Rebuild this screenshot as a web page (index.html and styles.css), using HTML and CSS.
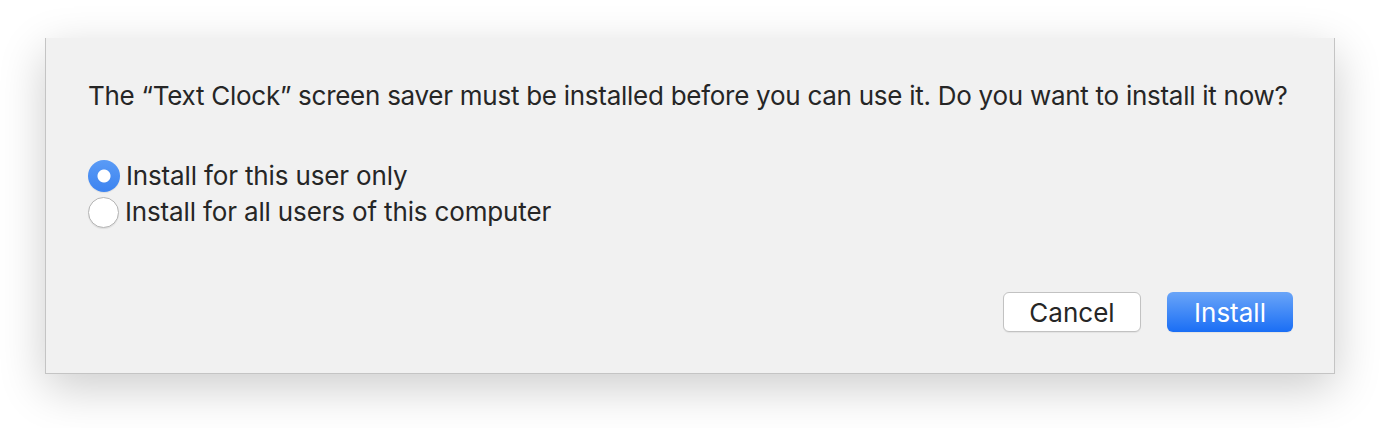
FILE: index.html
```html
<!DOCTYPE html>
<html lang="en">
<head>
  <meta charset="UTF-8" />
  <title>Install Screen Saver</title>
  <link rel="stylesheet" href="styles.css">
</head>
<body>

  <div class="dialog">
    <p class="message">The “Text Clock” screen saver must be installed before you can use it. Do you want to install it now?</p>

    <div class="options">
      <label class="option">
        <span class="radio checked"></span>
        Install for this user only
      </label>
      <label class="option">
        <span class="radio"></span>
        Install for all users of this computer
      </label>
    </div>

    <div class="buttons">
      <button class="btn">Cancel</button>
      <button class="btn primary">Install</button>
    </div>
  </div>

</body>
</html>
```

FILE: styles.css
```css
body {
  margin: 0;
  padding: 38px 0 0;
  background: #fff;
  font-family: Inter, "Liberation Sans", sans-serif;
  color: #262626;
  height: 428px;
  box-sizing: border-box;
  overflow: hidden;
}

.dialog {
  margin: 0 45px;
  height: 336px;
  box-sizing: border-box;
  background: #f1f1f1;
  border: 1px solid #c4c4c4;
  border-top: none;
  box-shadow: 0 14px 44px rgba(0,0,0,0.2);
  padding: 40px 41px 0 42px;
  display: flex;
  flex-direction: column;
}

.message {
  margin: 0;
  font-size: 26px;
  line-height: 36px;
  letter-spacing: -0.27px;
  white-space: nowrap;
}

.options {
  margin-top: 46px;
  display: flex;
  flex-direction: column;
  gap: 4px;
}

.option {
  display: flex;
  align-items: center;
  gap: 6px;
  font-size: 26px;
  line-height: 32px;
  letter-spacing: -0.15px;
}

.radio {
  width: 31px;
  height: 31px;
  border-radius: 50%;
  box-sizing: border-box;
  border: 1px solid #b5b5b5;
  background: #fff;
  box-shadow: 0 1px 1px rgba(0,0,0,0.08);
}

.radio.checked {
  border: none;
  width: 32px;
  height: 32px;
  background: radial-gradient(circle, #fff 0 6px, transparent 7px), linear-gradient(#5a9bf6, #3c83f0);
}

.buttons {
  margin-top: auto;
  margin-bottom: 41px;
  display: flex;
  justify-content: flex-end;
  gap: 26px;
}

.btn {
  font-family: inherit;
  font-size: 26px;
  color: #262626;
  height: 40px;
  padding: 0;
  width: 138px;
  border-radius: 6px;
  border: 1px solid #c2c2c2;
  background: #fff;
  box-shadow: 0 1px 1px rgba(0,0,0,0.06);
}

.btn.primary {
  width: 126px;
  color: #fff;
  border: none;
  background: linear-gradient(#6aa5f8, #1a6ef5);
}
```
